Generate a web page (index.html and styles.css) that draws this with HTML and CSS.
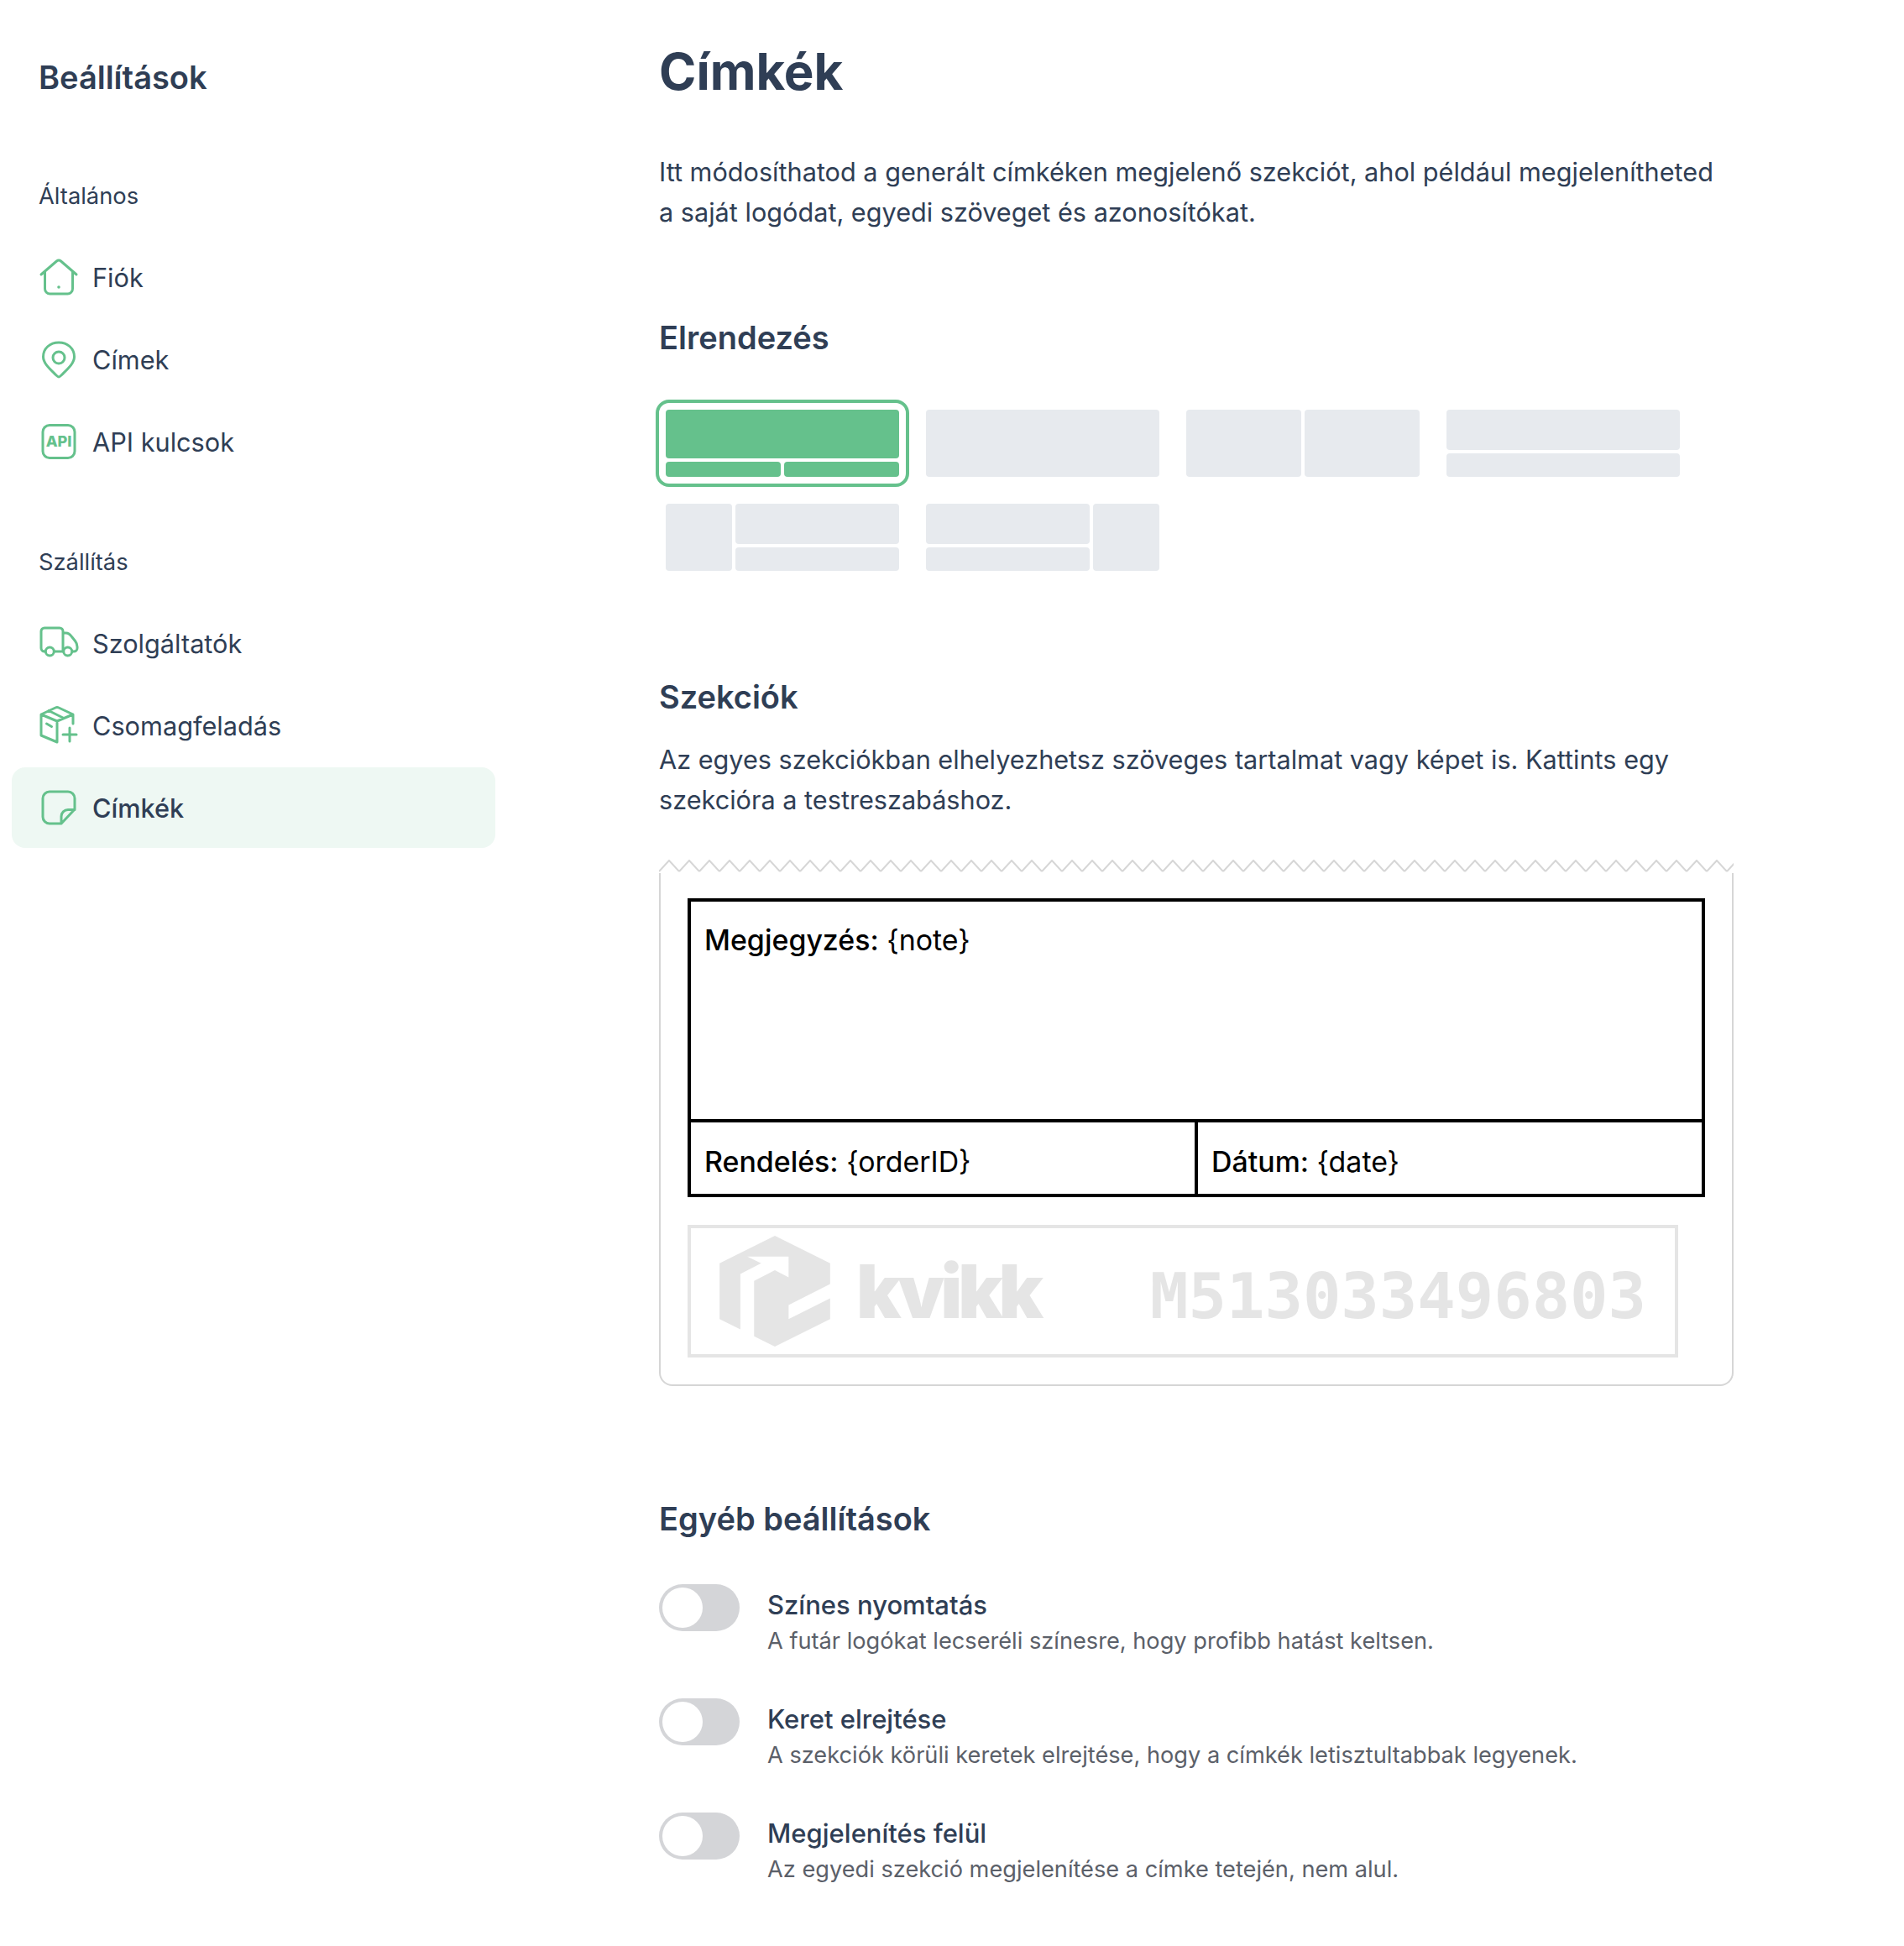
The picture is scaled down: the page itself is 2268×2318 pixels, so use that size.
FILE: index.html
```html
<!DOCTYPE html>
<html lang="hu">
<head>
    <title>Címkék</title>
    <meta charset="UTF-8">
    <link rel="stylesheet" href="styles.css">
</head>
<body>
    <div class="page">
        <nav class="sidebar">
            <h2 class="sidebar-title">Beállítások</h2>
            <div class="nav-group-label">Általános</div>
            <ul class="nav-list">
                <li class="nav-item">
                    <svg class="nav-icon" viewBox="0 0 48 48"><path d="M3 21 21.500 5a4 4 0 0 1 5 0L45 21M7.500 18v20a6 6 0 0 0 6 6h21a6 6 0 0 0 6-6V18"/><circle class="icon-fill" cx="24" cy="36" r="1.800"/></svg>
                    <span>Fiók</span>
                </li>
                <li class="nav-item">
                    <svg class="nav-icon" viewBox="0 0 48 48"><path d="M24 45c-1 0-2-1-3-2C14 36 5.500 29 5.500 21 5.500 11 13.500 4 24 4s18.500 7 18.500 17c0 8-8.500 15-15.500 22-1 1-2 2-3 2Z"/><circle cx="24" cy="22" r="7"/></svg>
                    <span>Címek</span>
                </li>
                <li class="nav-item">
                    <svg class="nav-icon" viewBox="0 0 48 48"><rect x="5" y="4.500" width="38" height="39" rx="8"/><text class="icon-text" x="24" y="30" text-anchor="middle">API</text></svg>
                    <span>API kulcsok</span>
                </li>
            </ul>
            <div class="nav-group-label">Szállítás</div>
            <ul class="nav-list">
                <li class="nav-item">
                    <svg class="nav-icon" viewBox="0 0 48 48"><path d="M8 34H7a4 4 0 0 1-4-4V10a4 4 0 0 1 4-4h18a4 4 0 0 1 4 4v24H18.500M29.500 12h3c3 0 5 1.500 7 4.500l4 5c2 2.500 2.500 4.500 2.500 7v1.500a4 4 0 0 1-4 4h-1.500"/><circle cx="13.300" cy="34" r="5"/><circle cx="34.700" cy="34" r="5"/></svg>
                    <span>Szolgáltatók</span>
                </li>
                <li class="nav-item">
                    <svg class="nav-icon" viewBox="0 0 48 48"><path d="M41 22V11L24 3a4 4 0 0 0-4 0L3 11v25l19 8M3 11l19 8 19-8M22 19v25M12 6.500l18 9M9.500 22l6 3.500M37 27v16M29 35h16"/></svg>
                    <span>Csomagfeladás</span>
                </li>
                <li class="nav-item active">
                    <svg class="nav-icon" viewBox="0 0 48 48"><path d="M5 13a8 8 0 0 1 8-8h22a8 8 0 0 1 8 8v13L27 43H13a8 8 0 0 1-8-8ZM43 26.500h-8a8 8 0 0 0-8 8V43"/></svg>
                    <span>Címkék</span>
                </li>
            </ul>
        </nav>

        <main class="content">
            <h1 class="page-title">Címkék</h1>
            <p class="lead">Itt módosíthatod a generált címkéken megjelenő szekciót, ahol például megjelenítheted a saját logódat, egyedi szöveget és azonosítókat.</p>

            <h2 class="section-title layout-title">Elrendezés</h2>
            <div class="layout-grid">
                <div class="layout-option selected">
                    <div class="layout-tiles tiles-a"><i class="span-2"></i><i></i><i></i></div>
                </div>
                <div class="layout-option">
                    <div class="layout-tiles tiles-b"><i></i></div>
                </div>
                <div class="layout-option">
                    <div class="layout-tiles tiles-c"><i></i><i></i></div>
                </div>
                <div class="layout-option">
                    <div class="layout-tiles tiles-d"><i></i><i></i></div>
                </div>
                <div class="layout-option">
                    <div class="layout-tiles tiles-e"><i class="span-rows"></i><i></i><i></i></div>
                </div>
                <div class="layout-option">
                    <div class="layout-tiles tiles-f"><i></i><i class="span-rows"></i><i></i></div>
                </div>
            </div>

            <h2 class="section-title sections-title">Szekciók</h2>
            <p class="section-text">Az egyes szekciókban elhelyezhetsz szöveges tartalmat vagy képet is. Kattints egy szekcióra a testreszabáshoz.</p>

            <svg class="zigzag" height="16" width="1280">
                <defs>
                    <pattern id="zig" width="24" height="16" patternUnits="userSpaceOnUse">
                        <path d="M0 14 12 1l12 13" fill="none" stroke="#d6d6d6" stroke-width="2"/>
                    </pattern>
                </defs>
                <rect width="1280" height="16" fill="url(#zig)"/>
            </svg>
            <div class="label-card">
                <div class="label-table">
                    <div class="label-cell note-cell"><b>Megjegyzés:</b> {note}</div>
                    <div class="label-cell"><b>Rendelés:</b> {orderID}</div>
                    <div class="label-cell"><b>Dátum:</b> {date}</div>
                </div>
                <div class="label-footer">
                    <svg class="kvikk-mark" viewBox="204 126 394 395"><path d="M401 126 598 224V298L450 373V423L598 349V423L401 521 327 484V287L401 249 450 274V200H303L352 224 278 262V460L204 423V224Z"/></svg>
                    <span class="kvikk-word">kvikk</span>
                    <span class="tracking-code">M513033496803</span>
                </div>
            </div>

            <h2 class="section-title other-title">Egyéb beállítások</h2>
            <div class="toggle-list">
                <div class="toggle-row">
                    <span class="toggle"><span class="toggle-knob"></span></span>
                    <div>
                        <div class="toggle-label">Színes nyomtatás</div>
                        <div class="toggle-desc">A futár logókat lecseréli színesre, hogy profibb hatást keltsen.</div>
                    </div>
                </div>
                <div class="toggle-row">
                    <span class="toggle"><span class="toggle-knob"></span></span>
                    <div>
                        <div class="toggle-label">Keret elrejtése</div>
                        <div class="toggle-desc">A szekciók körüli keretek elrejtése, hogy a címkék letisztultabbak legyenek.</div>
                    </div>
                </div>
                <div class="toggle-row">
                    <span class="toggle"><span class="toggle-knob"></span></span>
                    <div>
                        <div class="toggle-label">Megjelenítés felül</div>
                        <div class="toggle-desc">Az egyedi szekció megjelenítése a címke tetején, nem alul.</div>
                    </div>
                </div>
            </div>
        </main>
    </div>
</body>
</html>
```

FILE: styles.css
```css
body {
    margin: 0;
    background: #fff;
    color: #2f3e55;
    font-family: Inter, "Liberation Sans", sans-serif;
}

h1, h2, p, ul {
    margin: 0;
    padding: 0;
}

.page {
    display: flex;
}

.sidebar {
    width: 576px;
    margin-left: 14px;
    padding-top: 64px;
}

.sidebar-title {
    padding-left: 32px;
    font-size: 38px;
    line-height: 56px;
    font-weight: 600;
}

.nav-group-label {
    padding-left: 32px;
    font-size: 27.300px;
    line-height: 40px;
    margin-top: 94px;
    margin-bottom: 28px;
}

.nav-list {
    list-style: none;
    display: flex;
    flex-direction: column;
    gap: 2px;
}

.nav-list + .nav-group-label {
    margin-top: 76px;
}

.nav-item {
    display: flex;
    align-items: center;
    gap: 16px;
    height: 96px;
    padding-left: 32px;
    border-radius: 16px;
    font-size: 30.700px;
}

.nav-item.active {
    background: #eef8f3;
    font-weight: 500;
}

.nav-icon {
    width: 48px;
    height: 48px;
    flex: none;
    fill: none;
    stroke: #65c18c;
    stroke-width: 3;
    stroke-linecap: round;
    stroke-linejoin: round;
}

.icon-fill {
    fill: #65c18c;
    stroke: none;
}

.icon-text {
    fill: #65c18c;
    stroke: none;
    font-size: 18px;
    font-weight: 800;
    font-family: Inter, sans-serif;
}

.content {
    width: 1280px;
    margin-left: 195px;
}

.page-title {
    font-size: 60px;
    line-height: 72px;
    font-weight: 700;
    margin-top: 49px;
}

.lead, .section-text {
    font-size: 30.650px;
    line-height: 48px;
}

.lead {
    margin-top: 60px;
}

.section-title {
    font-size: 38px;
    line-height: 48px;
    font-weight: 600;
}

.layout-title {
    margin-top: 101px;
}

.layout-grid {
    display: grid;
    grid-template-columns: repeat(4, 294px);
    gap: 16px;
    margin-top: 54px;
}

.layout-option {
    padding: 8px;
    border-radius: 12px;
}

.layout-option.selected {
    outline: 4px solid #65c18c;
}

.layout-tiles {
    display: grid;
    gap: 4px;
    height: 80px;
}

.layout-tiles i {
    background: #e7eaee;
    border-radius: 4px;
}

.selected .layout-tiles i {
    background: #65c18c;
}

.tiles-a {
    grid-template-columns: 1fr 1fr;
    grid-template-rows: 58px 18px;
}

.tiles-c {
    grid-template-columns: 1fr 1fr;
}

.tiles-d {
    grid-template-rows: 48px 28px;
}

.tiles-e {
    grid-template-columns: 79px 195px;
    grid-template-rows: 48px 28px;
}

.tiles-f {
    grid-template-columns: 195px 79px;
    grid-template-rows: 48px 28px;
}

.span-2 {
    grid-column: span 2;
}

.span-rows {
    grid-row: span 2;
}

.sections-title {
    margin-top: 118px;
}

.section-text {
    margin-top: 27px;
}

.zigzag {
    display: block;
    margin-top: 47px;
}

.label-card {
    border: 2px solid #d6d6d6;
    border-top: 0;
    border-radius: 0 0 16px 16px;
    padding: 30px 32px 32px;
}

.label-table {
    display: grid;
    grid-template-columns: 600px 1fr;
    grid-template-rows: 263px 85px;
    border: 4px solid #000;
    color: #000;
    font-size: 33.900px;
    line-height: 48px;
}

.label-table b {
    font-weight: 500;
}

.label-cell {
    padding: 23px 16px 0;
}

.note-cell {
    grid-column: span 2;
    border-bottom: 4px solid #000;
    padding-top: 22px;
}

.label-cell:last-child {
    border-left: 4px solid #000;
}

.label-footer {
    display: flex;
    align-items: center;
    width: 1180px;
    height: 158px;
    box-sizing: border-box;
    margin-top: 33px;
    padding-left: 34px;
    border: 4px solid #e5e5e5;
    color: #e5e5e5;
}

.kvikk-mark {
    width: 132px;
    height: 132px;
    fill: #e5e5e5;
}

.kvikk-word {
    margin-left: 31px;
    font-size: 88px;
    font-weight: 900;
    letter-spacing: -5px;
}

.tracking-code {
    margin-left: auto;
    margin-right: 34px;
    margin-top: 12px;
    font-family: "DejaVu Sans Mono", monospace;
    font-weight: 700;
    font-size: 75.500px;
}

.other-title {
    margin-top: 134px;
}

.toggle-list {
    display: flex;
    flex-direction: column;
    gap: 32px;
    margin-top: 54px;
}

.toggle-row {
    display: flex;
    gap: 33px;
    height: 104px;
}

.toggle {
    flex: none;
    width: 96px;
    height: 56px;
    padding: 4px;
    box-sizing: border-box;
    border-radius: 28px;
    background: #d4d5d8;
}

.toggle-knob {
    display: block;
    width: 48px;
    height: 48px;
    border-radius: 50%;
    background: #fff;
}

.toggle-label {
    font-size: 31px;
    line-height: 49px;
    font-weight: 500;
}

.toggle-desc {
    font-size: 27.200px;
    line-height: 38px;
    color: #5b6069;
}
```
